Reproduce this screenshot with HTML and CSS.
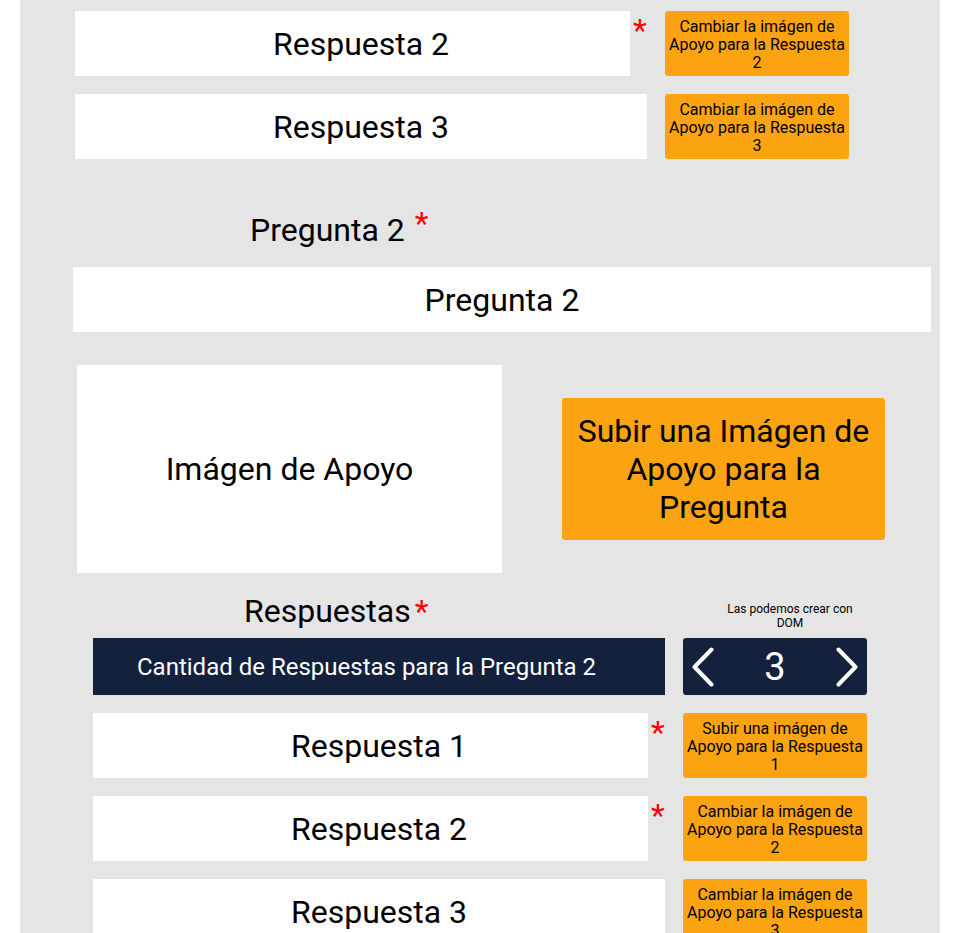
FILE: index.html
```html
<!DOCTYPE html>
<html lang="es">
<head>
<meta charset="utf-8">
<title>Pregunta 2</title>
<link rel="stylesheet" href="styles.css">
</head>
<body>
<div class="panel">
  <section class="answers answers-a">
    <div class="row">
      <div class="field">
        <div class="input short">Respuesta 2</div>
        <span class="req">*</span>
      </div>
      <div class="btn-small">Cambiar la imágen de<br>Apoyo para la Respuesta<br>2</div>
    </div>
    <div class="row">
      <div class="field">
        <div class="input full">Respuesta 3</div>
      </div>
      <div class="btn-small">Cambiar la imágen de<br>Apoyo para la Respuesta<br>3</div>
    </div>
  </section>

  <div class="q-label">Pregunta 2 <span class="req req-up">*</span></div>
  <div class="q-input">Pregunta 2</div>

  <div class="media-row">
    <div class="img-box">Imágen de Apoyo</div>
    <div class="btn-big">Subir una Imágen de<br>Apoyo para la<br>Pregunta</div>
  </div>

  <div class="resp-head">
    <div class="resp-label">Respuestas<span class="req">*</span></div>
    <div class="note">Las podemos crear con<br>DOM</div>
  </div>

  <div class="count-row">
    <div class="count-bar">Cantidad de Respuestas para la Pregunta 2</div>
    <div class="stepper">
      <svg class="chev" width="22" height="40" viewBox="0 0 22 40"><polyline points="19.5,2.5 2.5,20 19.5,37.5" fill="none" stroke="#fff" stroke-width="4" stroke-linecap="round" stroke-linejoin="round"/></svg>
      <span class="count">3</span>
      <svg class="chev" width="22" height="40" viewBox="0 0 22 40"><polyline points="2.5,2.5 19.5,20 2.5,37.5" fill="none" stroke="#fff" stroke-width="4" stroke-linecap="round" stroke-linejoin="round"/></svg>
    </div>
  </div>

  <section class="answers answers-b">
    <div class="row">
      <div class="field">
        <div class="input short">Respuesta 1</div>
        <span class="req">*</span>
      </div>
      <div class="btn-small">Subir una imágen de<br>Apoyo para la Respuesta<br>1</div>
    </div>
    <div class="row">
      <div class="field">
        <div class="input short">Respuesta 2</div>
        <span class="req">*</span>
      </div>
      <div class="btn-small">Cambiar la imágen de<br>Apoyo para la Respuesta<br>2</div>
    </div>
    <div class="row">
      <div class="field">
        <div class="input full">Respuesta 3</div>
      </div>
      <div class="btn-small">Cambiar la imágen de<br>Apoyo para la Respuesta<br>3</div>
    </div>
  </section>
</div>
</body>
</html>
```

FILE: styles.css
```css
* { box-sizing: border-box; }

html, body {
  margin: 0;
  padding: 0;
  background: #ffffff;
}

body {
  font-family: Roboto, "Liberation Sans", sans-serif;
  color: #000000;
  overflow: hidden;
}

.panel {
  margin-left: 20px;
  width: 920px;
  min-height: 1000px;
  background: #e5e5e5;
  padding-top: 11px;
}

.answers {
  display: flex;
  flex-direction: column;
  gap: 18px;
}

.answers-a { padding-left: 55px; }
.answers-b { padding-left: 73px; margin-top: 18px; }

.row {
  display: grid;
  grid-template-columns: 572px 184px;
  column-gap: 18px;
  height: 65px;
}

.field {
  display: flex;
  align-items: flex-start;
}

.input {
  height: 65px;
  background: #ffffff;
  display: flex;
  align-items: center;
  justify-content: center;
  font-size: 32px;
}

.input.short { width: 555px; padding-left: 17px; }
.input.full { width: 572px; }

.req {
  color: #ff0000;
  font-size: 32px;
  line-height: normal;
  margin-left: 3px;
}

.btn-small {
  width: 184px;
  height: 65px;
  background: #fca311;
  border-radius: 3px;
  display: flex;
  align-items: center;
  justify-content: center;
  text-align: center;
  font-size: 16px;
  line-height: 18px;
  padding-top: 2px;
  color: #000000;
}

.q-label {
  margin-top: 48px;
  padding-left: 230px;
  font-size: 32px;
  line-height: 38px;
  height: 38px;
}

.req-up {
  margin-left: 2px;
  vertical-align: 7px;
  line-height: 1;
}

.q-input {
  margin-top: 22px;
  margin-left: 53px;
  width: 858px;
  height: 65px;
  background: #ffffff;
  display: flex;
  align-items: center;
  justify-content: center;
  font-size: 32px;
}

.media-row {
  margin-top: 33px;
  padding-left: 57px;
  display: flex;
  align-items: center;
}

.img-box {
  width: 425px;
  height: 208px;
  background: #ffffff;
  display: flex;
  align-items: center;
  justify-content: center;
  font-size: 32px;
}

.btn-big {
  margin-left: 60px;
  width: 323px;
  height: 142px;
  background: #fca311;
  border-radius: 3px;
  display: flex;
  align-items: center;
  justify-content: center;
  text-align: center;
  font-size: 32px;
  line-height: normal;
}

.resp-head {
  margin-top: 19px;
  padding-left: 73px;
  display: grid;
  grid-template-columns: 572px 184px;
  column-gap: 18px;
  align-items: end;
}

.resp-label {
  padding-left: 151px;
  font-size: 32px;
  line-height: 38px;
  height: 38px;
}

.resp-label .req { margin-left: 4px; line-height: 1; }

.note {
  padding-left: 30px;
  text-align: center;
  font-size: 12px;
  line-height: 14px;
  color: #000000;
}

.count-row {
  margin-top: 8px;
  padding-left: 73px;
  display: grid;
  grid-template-columns: 572px 184px;
  column-gap: 18px;
  height: 57px;
}

.count-bar {
  background: #14213d;
  color: #ffffff;
  font-size: 24px;
  display: flex;
  align-items: center;
  padding-left: 44px;
}

.stepper {
  background: #14213d;
  border-radius: 3px;
  display: flex;
  align-items: center;
  justify-content: space-between;
  padding: 0 9px;
}

.chev { display: block; }

.count {
  color: #ffffff;
  font-size: 38px;
  line-height: 1;
}
```
